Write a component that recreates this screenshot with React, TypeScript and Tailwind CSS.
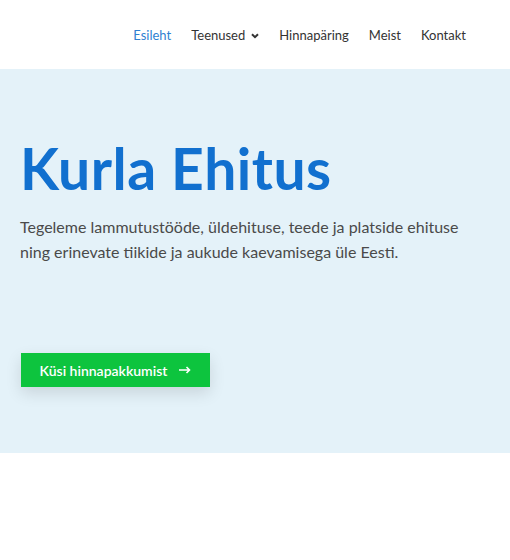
import React from 'react';

const navItems = ['Esileht', 'Teenused', 'Hinnapäring', 'Meist', 'Kontakt'];

export default function App() {
  return (
    <div className="min-h-[560px] bg-white font-['Lato',sans-serif]">
      {/* Header */}
      <header className="h-[69px] flex items-center justify-end pr-[44px] pt-[2px]">
        <nav className="flex items-center gap-[20px] text-[13px] text-[#333]">
          {navItems.map((item) => (
            <a
              key={item}
              href="#"
              className={`flex items-center gap-[6px] ${item === 'Esileht' ? 'text-[#2f7fd1]' : ''}`}
            >
              {item}
              {item === 'Teenused' && (
                <svg width="8" height="6" viewBox="0 0 8 6" fill="none">
                  <path d="M1 1.2l3 3 3-3" stroke="#333" strokeWidth="2" />
                </svg>
              )}
            </a>
          ))}
        </nav>
      </header>

      {/* Hero */}
      <section className="h-[384px] bg-[#e4f2f9] px-[20px] pt-[64px]">
        <h1 className="text-[57px] font-bold leading-[70px] text-[#1170cf] tracking-[0.5px]">Kurla Ehitus</h1>
        <p className="mt-[11px] text-[16px] leading-[25px] text-[#4a4a4a]">
          Tegeleme lammutustööde, üldehituse, teede ja platside ehituse
          <br />
          ning erinevate tiikide ja aukude kaevamisega üle Eesti.
        </p>
        <button className="mt-[89px] ml-[1px] h-[34px] w-[189px] flex items-center justify-center gap-[12px] bg-[#0dc43e] text-white text-[14px] font-semibold shadow-[0_6px_16px_rgba(0,0,0,0.12)]">
          Küsi hinnapakkumist
          <svg width="12" height="8" viewBox="0 0 12 8" fill="none">
            <path d="M0 4h10M7.5 1l3 3-3 3" stroke="white" strokeWidth="1.6" />
          </svg>
        </button>
      </section>
    </div>
  );
}
